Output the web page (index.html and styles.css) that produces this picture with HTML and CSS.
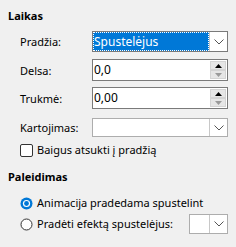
FILE: index.html
```html
<!DOCTYPE html>
<html>
<head>
<meta charset="utf-8">
<link rel="stylesheet" href="styles.css">
</head>
<body>
<div class="panel">
  <div class="heading">Laikas</div>
  <div class="row r-start">
    <span class="label">Pradžia:</span>
    <div class="combo">
      <div class="combo-value selected"><span class="focus">Spustelėjus</span></div>
      <div class="combo-btn"><svg width="10" height="6" viewBox="0 0 10 6"><path d="M0.5 0.5 L5 5 L9.5 0.5" fill="none" stroke="#555" stroke-width="1"/></svg></div>
    </div>
  </div>
  <div class="row r-delay">
    <span class="label">Delsa:</span>
    <div class="spin">
      <div class="spin-value">0,0</div>
      <div class="spin-btns">
        <div class="spin-btn"><svg width="7" height="4" viewBox="0 0 7 4"><path d="M0 4 L3.5 0 L7 4 Z" fill="#000"/></svg></div>
        <div class="spin-btn"><svg width="7" height="4" viewBox="0 0 7 4"><path d="M0 0 L3.5 4 L7 0 Z" fill="#9a9a9a"/></svg></div>
      </div>
    </div>
  </div>
  <div class="row r-dur">
    <span class="label">Trukmė:</span>
    <div class="spin">
      <div class="spin-value">0,00</div>
      <div class="spin-btns">
        <div class="spin-btn"><svg width="7" height="4" viewBox="0 0 7 4"><path d="M0 4 L3.5 0 L7 4 Z" fill="#000"/></svg></div>
        <div class="spin-btn"><svg width="7" height="4" viewBox="0 0 7 4"><path d="M0 0 L3.5 4 L7 0 Z" fill="#9a9a9a"/></svg></div>
      </div>
    </div>
  </div>
  <div class="row r-rep">
    <span class="label">Kartojimas:</span>
    <div class="combo white">
      <div class="combo-value"></div>
      <div class="combo-btn"><svg width="10" height="6" viewBox="0 0 10 6"><path d="M0.5 0.5 L5 5 L9.5 0.5" fill="none" stroke="#555" stroke-width="1"/></svg></div>
    </div>
  </div>
  <div class="check-row">
    <span class="checkbox"></span>
    <span>Baigus atsukti į pradžią</span>
  </div>

  <div class="heading h2">Paleidimas</div>
  <div class="radio-row first">
    <svg class="radio" width="13" height="13" viewBox="0 0 13 13"><circle cx="6.5" cy="6.5" r="6" fill="#0078d7"/><circle cx="6.5" cy="6.5" r="3.6" fill="#fff"/><circle cx="6.5" cy="6.5" r="2.4" fill="#0078d7"/></svg>
    <span>Animacija pradedama spustelint</span>
  </div>
  <div class="radio-row second">
    <svg class="radio" width="13" height="13" viewBox="0 0 13 13"><circle cx="6.5" cy="6.5" r="5.5" fill="#fff" stroke="#333" stroke-width="1"/></svg>
    <span class="radio-label">Pradėti efektą spustelėjus:</span>
    <div class="combo small">
      <div class="combo-value"></div>
      <div class="combo-btn"><svg width="10" height="6" viewBox="0 0 10 6"><path d="M0.5 0.5 L5 5 L9.5 0.5" fill="none" stroke="#555" stroke-width="1"/></svg></div>
    </div>
  </div>
</div>
</body>
</html>
```
FILE: styles.css
```css
html, body {
  margin: 0;
  padding: 0;
  background: #f0f0f0;
}
body {
  font-family: "Segoe UI", "Noto Sans", "Open Sans", sans-serif;
  font-size: 11px;
  color: #000;
  width: 236px;
  height: 247px;
  overflow: hidden;
  white-space: nowrap;
}
.panel {
  padding: 8px 8px 0 8px;
  display: flex;
  flex-direction: column;
}
.heading {
  font-weight: bold;
  line-height: 16px;
  height: 16px;
}
.h2 {
  margin-top: 11px;
}
.row {
  display: flex;
  align-items: center;
  padding-left: 12px;
}
.r-start { margin-top: 7px; }
.r-delay { margin-top: 7px; }
.r-dur { margin-top: 6px; }
.r-rep { margin-top: 9px; }
.label {
  width: 72px;
  flex: none;
}
.combo {
  display: flex;
  width: 136px;
  height: 21px;
  box-sizing: border-box;
  border: 1px solid #7a7a7a;
  background: #fff;
}
.combo.white { height: 19px; border-color: #adadad; }
.combo-value {
  flex: 1;
  display: flex;
  align-items: stretch;
}
.combo-value.selected {
  background: #0078d7;
  color: #fff;
}
.focus {
  flex: 1;
  border: 1px dotted #000;
  outline: 1px dotted #fff;
  outline-offset: -1px;
  line-height: 17px;
  font-size: 12px;
}
.combo-btn {
  width: 17px;
  flex: none;
  border-left: 1px solid #c8c8c8;
  display: flex;
  align-items: center;
  justify-content: center;
  background: #fff;
}
.spin {
  display: flex;
  width: 136px;
  height: 22px;
  box-sizing: border-box;
  border: 1px solid #7a7a7a;
  background: #fff;
}
.spin-value {
  flex: 1;
  line-height: 20px;
  padding-left: 1px;
  font-size: 12px;
}
.spin-btns {
  width: 16px;
  flex: none;
  display: flex;
  flex-direction: column;
  padding: 1px 1px 1px 0;
}
.spin-btn {
  flex: 1;
  background: #e6e6e6;
  border: 1px solid #d4d4d4;
  display: flex;
  align-items: center;
  justify-content: center;
}
.check-row {
  display: flex;
  align-items: center;
  gap: 4px;
  padding-left: 12px;
  margin-top: 5px;
  line-height: 16px;
}
.checkbox {
  width: 13px;
  height: 13px;
  box-sizing: border-box;
  border: 1px solid #333;
  border-radius: 2px;
  background: #fff;
}
.radio-row {
  display: flex;
  align-items: center;
  gap: 4px;
  padding-left: 12px;
  line-height: 16px;
}
.radio-row.first { margin-top: 10px; }
.radio-row.second { margin-top: 3px; }
.radio { flex: none; }
.radio-label { flex: 1; }
.combo.small {
  width: 39px;
  height: 20px;
  border-color: #adadad;
}
.combo.small .combo-btn { width: 17px; }
```
